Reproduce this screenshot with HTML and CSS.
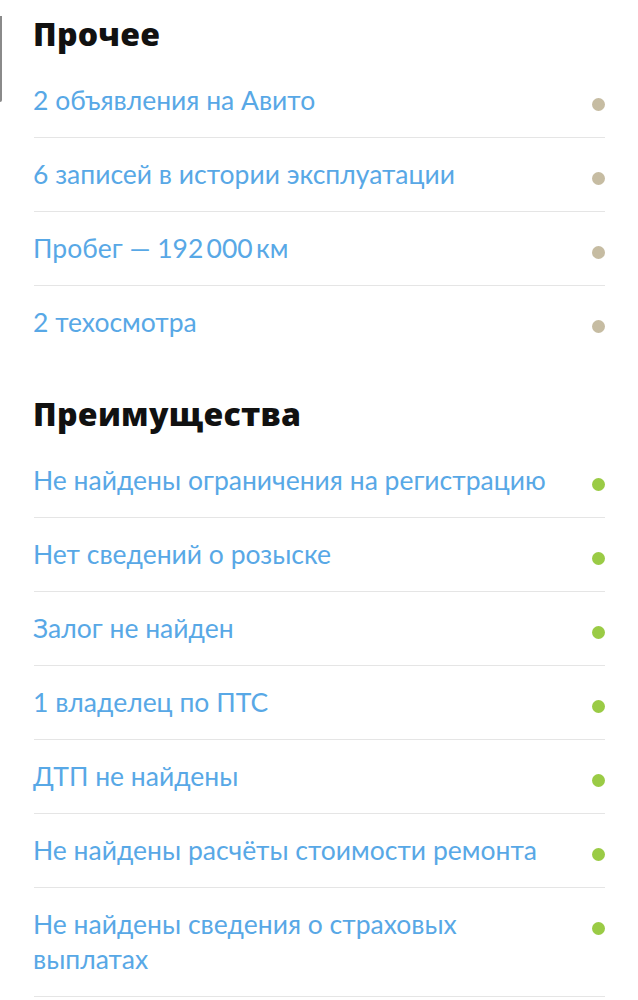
FILE: index.html
```html
<!DOCTYPE html>
<html lang="ru">
<head>
    <meta charset="UTF-8">
    <meta name="viewport" content="width=device-width, initial-scale=1.0">
    <title>Отчёт об автомобиле</title>
    <link rel="stylesheet" href="styles.css">
</head>
<body>

<div class="page">

<section class="group">
    <h2>Прочее</h2>
    <ul class="facts">
        <li><span>2 объявления на Авито</span><i class="dot neutral"></i></li>
        <li><span>6 записей в истории эксплуатации</span><i class="dot neutral"></i></li>
        <li><span>Пробег — 192&#8201;000&#8201;км</span><i class="dot neutral"></i></li>
        <li class="last"><span>2 техосмотра</span><i class="dot neutral"></i></li>
    </ul>
</section>

<section class="group">
    <h2>Преимущества</h2>
    <ul class="facts">
        <li><span>Не найдены ограничения на регистрацию</span><i class="dot good"></i></li>
        <li><span>Нет сведений о розыске</span><i class="dot good"></i></li>
        <li><span>Залог не найден</span><i class="dot good"></i></li>
        <li><span>1 владелец по ПТС</span><i class="dot good"></i></li>
        <li><span>ДТП не найдены</span><i class="dot good"></i></li>
        <li><span>Не найдены расчёты стоимости ремонта</span><i class="dot good"></i></li>
        <li><span>Не найдены сведения о страховых выплатах</span><i class="dot good"></i></li>
    </ul>
</section>

</div>

</body>
</html>
```

FILE: styles.css
```css
body {
    font-family: Lato, "Open Sans", sans-serif;
    margin: 0;
    padding: 0;
    background-color: #fff;
}
.page {
    position: relative;
    padding: 0 33px 0 34px;
}
.page::before {
    content: "";
    position: absolute;
    left: 0;
    top: 0;
    width: 2px;
    height: 86px;
    background-color: #8a8a8a;
    border-bottom-right-radius: 3px;
}
h2 {
    font-family: "Open Sans", sans-serif;
    font-weight: 800;
    font-size: 32px;
    line-height: 36px;
    letter-spacing: 0.3px;
    color: #111;
    margin: 16px 0 12px -1px;
}
.group + .group h2 {
    margin-top: 37px;
    margin-bottom: 12px;
}
.facts {
    list-style: none;
    margin: 0;
    padding: 0;
}
.facts li {
    display: flex;
    align-items: flex-start;
    justify-content: space-between;
    gap: 40px;
    padding: 19px 0;
    border-bottom: 1px solid #e5e5e5;
    font-size: 26.5px;
    line-height: 35px;
    color: #58a8e6;
}
.facts li span {
    margin-left: -1px;
}
.facts li.last {
    border-bottom: none;
}
.dot {
    flex: none;
    width: 13px;
    height: 13px;
    border-radius: 50%;
    margin: 15px 0 0;
}
.dot.neutral {
    background-color: #c6bca2;
}
.dot.good {
    background-color: #9acb45;
}
```
